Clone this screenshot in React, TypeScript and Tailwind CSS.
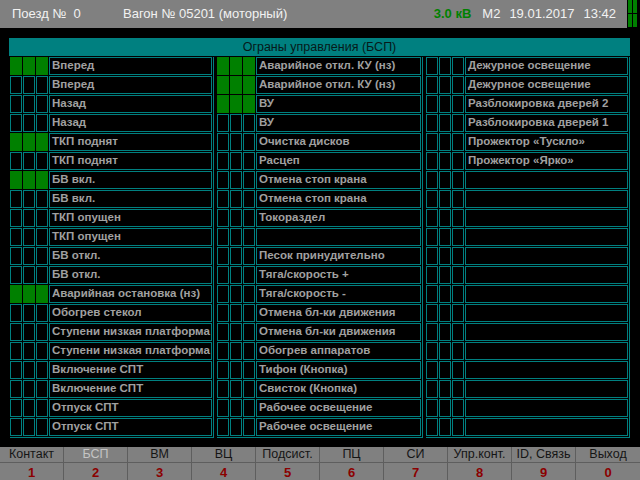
import clsx from "clsx";

const g1: [string, boolean][] = [
  ["Вперед", true],
  ["Вперед", false],
  ["Назад", false],
  ["Назад", false],
  ["ТКП поднят", true],
  ["ТКП поднят", false],
  ["БВ вкл.", true],
  ["БВ вкл.", false],
  ["ТКП опущен", false],
  ["ТКП опущен", false],
  ["БВ откл.", false],
  ["БВ откл.", false],
  ["Аварийная остановка (нз)", true],
  ["Обогрев стекол", false],
  ["Ступени низкая платформа", false],
  ["Ступени низкая платформа", false],
  ["Включение СПТ", false],
  ["Включение СПТ", false],
  ["Отпуск СПТ", false],
  ["Отпуск СПТ", false],
];

const g2: [string, boolean][] = [
  ["Аварийное откл. КУ (нз)", true],
  ["Аварийное откл. КУ (нз)", true],
  ["ВУ", true],
  ["ВУ", false],
  ["Очистка дисков", false],
  ["Расцеп", false],
  ["Отмена стоп крана", false],
  ["Отмена стоп крана", false],
  ["Токораздел", false],
  ["", false],
  ["Песок принудительно", false],
  ["Тяга/скорость +", false],
  ["Тяга/скорость -", false],
  ["Отмена бл-ки движения", false],
  ["Отмена бл-ки движения", false],
  ["Обогрев аппаратов", false],
  ["Тифон (Кнопка)", false],
  ["Свисток (Кнопка)", false],
  ["Рабочее освещение", false],
  ["Рабочее освещение", false],
];

const g3: [string, boolean][] = [
  ["Дежурное освещение", false],
  ["Дежурное освещение", false],
  ["Разблокировка дверей 2", false],
  ["Разблокировка дверей 1", false],
  ["Прожектор «Тускло»", false],
  ["Прожектор «Ярко»", false],
  ...Array.from({ length: 14 }, () => ["", false] as [string, boolean]),
];

const tabs = [
  ["Контакт", "1"],
  ["БСП", "2"],
  ["ВМ", "3"],
  ["ВЦ", "4"],
  ["Подсист.", "5"],
  ["ПЦ", "6"],
  ["СИ", "7"],
  ["Упр.конт.", "8"],
  ["ID, Связь", "9"],
  ["Выход", "0"],
];

function Row({ label, on }: { label: string; on: boolean }) {
  return (
    <div className="flex h-[18px] gap-px">
      {[0, 1, 2].map((i) => (
        <div
          key={i}
          className={clsx(
            "w-3 h-full border",
            on ? "bg-[#008000] border-[#008000]" : "border-[#008080]"
          )}
        />
      ))}
      <div className="flex-1 min-w-0 border border-[#008080] pl-[2px] flex items-center overflow-hidden whitespace-nowrap text-[11.5px] font-bold text-[#a0a0a0] leading-none">
        {label}
      </div>
    </div>
  );
}

function Group({ rows, w }: { rows: [string, boolean][]; w: string }) {
  return (
    <div className={clsx("flex flex-col gap-px pr-px pb-px border-r border-b border-[#008080]", w)}>
      {rows.map(([l, on], i) => (
        <Row key={i} label={l} on={on} />
      ))}
    </div>
  );
}

export default function App() {
  return (
    <div
      className="w-[640px] h-[480px] bg-black flex flex-col overflow-hidden"
      style={{ fontFamily: '"Liberation Sans", Arial, sans-serif' }}
    >
      {/* top status bar */}
      <div className="flex h-[28px]">
        <div className="w-[627px] bg-[#808080] flex items-center text-[13px] text-[#f2f2f2] whitespace-nowrap">
          <span className="ml-[12px] w-[111px]">Поезд №&nbsp; 0</span>
          <span>Вагон № 05201 (моторный)</span>
          <span className="ml-auto font-bold text-[#008000]">3.0 кВ</span>
          <span className="ml-[11px]">М2</span>
          <span className="ml-[9px]">19.01.2017</span>
          <span className="ml-[9px] mr-[11px]">13:42</span>
        </div>
        <div className="flex gap-px ml-px">
          {[0, 1].map((i) => (
            <div key={i} className="flex flex-col gap-px w-1">
              <div className="h-[13px] bg-[#008000]" />
              <div className="h-[13px] bg-[#008000]" />
            </div>
          ))}
        </div>
      </div>

      {/* control panel */}
      <div className="ml-[9px] mt-[10px] w-[621px]">
        <div className="h-[18px] bg-[#008080] flex items-center justify-center text-[12.5px] text-[#061a1a]">
          Ограны управления (БСП)
        </div>
        <div className="flex mt-px pl-px gap-[3px]">
          <Group rows={g1} w="w-[204px]" />
          <Group rows={g2} w="w-[206px]" />
          <Group rows={g3} w="w-[204px]" />
        </div>
      </div>

      {/* bottom tabs */}
      <div className="mt-auto h-[33px] bg-[#808080] flex">
        {tabs.map(([t, n], i) => (
          <div
            key={t}
            className={clsx("w-16 flex flex-col", i < tabs.length - 1 && "border-r border-[#5e5e5e]")}
          >
            <div
              className={clsx(
                "h-[16px] flex items-center justify-center text-[12.5px] border-b border-[#5e5e5e]",
                i === 1 ? "text-[#c4c4c4]" : "text-[#151515]"
              )}
            >
              {t}
            </div>
            <div className="flex-1 flex items-center justify-center text-[13px] font-bold text-[#8b0000]">
              {n}
            </div>
          </div>
        ))}
      </div>
    </div>
  );
}
